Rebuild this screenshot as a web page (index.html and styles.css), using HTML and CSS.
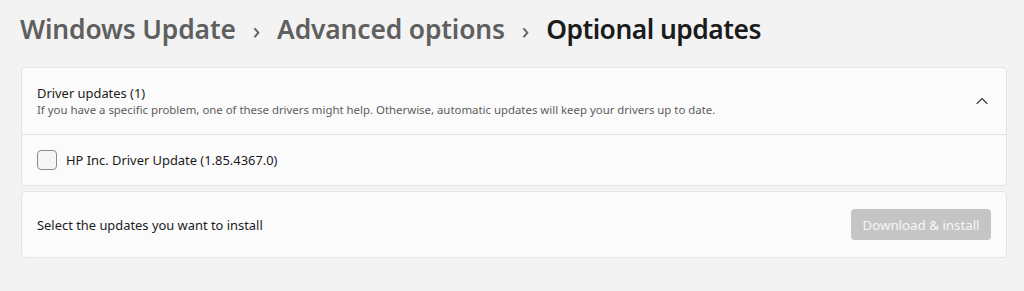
FILE: index.html
```html
<!DOCTYPE html>
<html lang="en">
<head>
  <meta charset="UTF-8" />
  <title>Optional updates</title>
  <link rel="stylesheet" href="styles.css">
</head>
<body>
  <div class="page">
    <div class="crumbs">
      <span class="crumb">Windows Update</span>
      <span class="sep">&#8250;</span>
      <span class="crumb">Advanced options</span>
      <span class="sep">&#8250;</span>
      <span class="crumb current">Optional updates</span>
    </div>

    <div class="card expander">
      <div class="exp-head">
        <div class="exp-text">
          <div class="exp-title">Driver updates (1)</div>
          <div class="exp-desc">If you have a specific problem, one of these drivers might help. Otherwise, automatic updates will keep your drivers up to date.</div>
        </div>
        <svg class="chevron" width="12" height="8" viewBox="0 0 12 8">
          <path d="M1 6.5 L6 1.5 L11 6.5" fill="none" stroke="#3a3a3a" stroke-width="1.1" stroke-linecap="round" stroke-linejoin="round"/>
        </svg>
      </div>
      <div class="exp-body">
        <label class="check-row">
          <span class="box"></span>
          <span>HP Inc. Driver Update (1.85.4367.0)</span>
        </label>
      </div>
    </div>

    <div class="card action">
      <span>Select the updates you want to install</span>
      <button class="btn" disabled>Download &amp; install</button>
    </div>
  </div>
</body>
</html>
```

FILE: styles.css
```css
body {
  margin: 0;
  background: #f3f3f3;
  font-family: "Noto Sans", "Open Sans", sans-serif;
  color: #1b1b1b;
}
.page {
  padding: 9px 17px 0 21px;
}
.crumbs {
  display: flex;
  align-items: center;
  height: 40px;
  margin-left: -1px;
  margin-bottom: 18px;
  font-size: 26.4px;
  font-weight: 600;
  color: #5f5f5f;
  letter-spacing: -0.15px;
}
.crumbs .current {
  color: #1b1b1b;
  letter-spacing: -0.5px;
}
.sep {
  font-size: 24px;
  font-weight: 400;
  margin: 0 17px;
  color: #5f5f5f;
}
.card {
  background: #fbfbfb;
  border: 1px solid #e5e5e5;
  border-radius: 4px;
}
.exp-head {
  display: flex;
  align-items: center;
  height: 66px;
  padding: 0 17px 0 15px;
  border-bottom: 1px solid #e3e3e3;
}
.exp-text {
  flex: 1;
  margin-top: -1px;
}
.exp-title {
  font-size: 12.9px;
  line-height: 18px;
}
.exp-desc {
  font-size: 11.4px;
  line-height: 15px;
  color: #5d5d5d;
}
.chevron {
  margin-right: 1px;
}
.exp-body {
  height: 50px;
  display: flex;
  align-items: center;
  padding-left: 15px;
}
.check-row {
  display: flex;
  align-items: center;
  font-size: 12.9px;
}
.box {
  width: 18px;
  height: 18px;
  border: 1px solid #8a8a8a;
  border-radius: 4px;
  background: #f6f6f6;
  margin-right: 9px;
}
.action {
  margin-top: 5px;
  height: 65px;
  display: flex;
  align-items: center;
  justify-content: space-between;
  padding: 0 15px;
  font-size: 12.9px;
}
.btn {
  width: 140px;
  height: 31px;
  border: none;
  border-radius: 4px;
  background: #c5c5c5;
  color: #f7f7f7;
  font-family: inherit;
  font-size: 13.3px;
}
```
